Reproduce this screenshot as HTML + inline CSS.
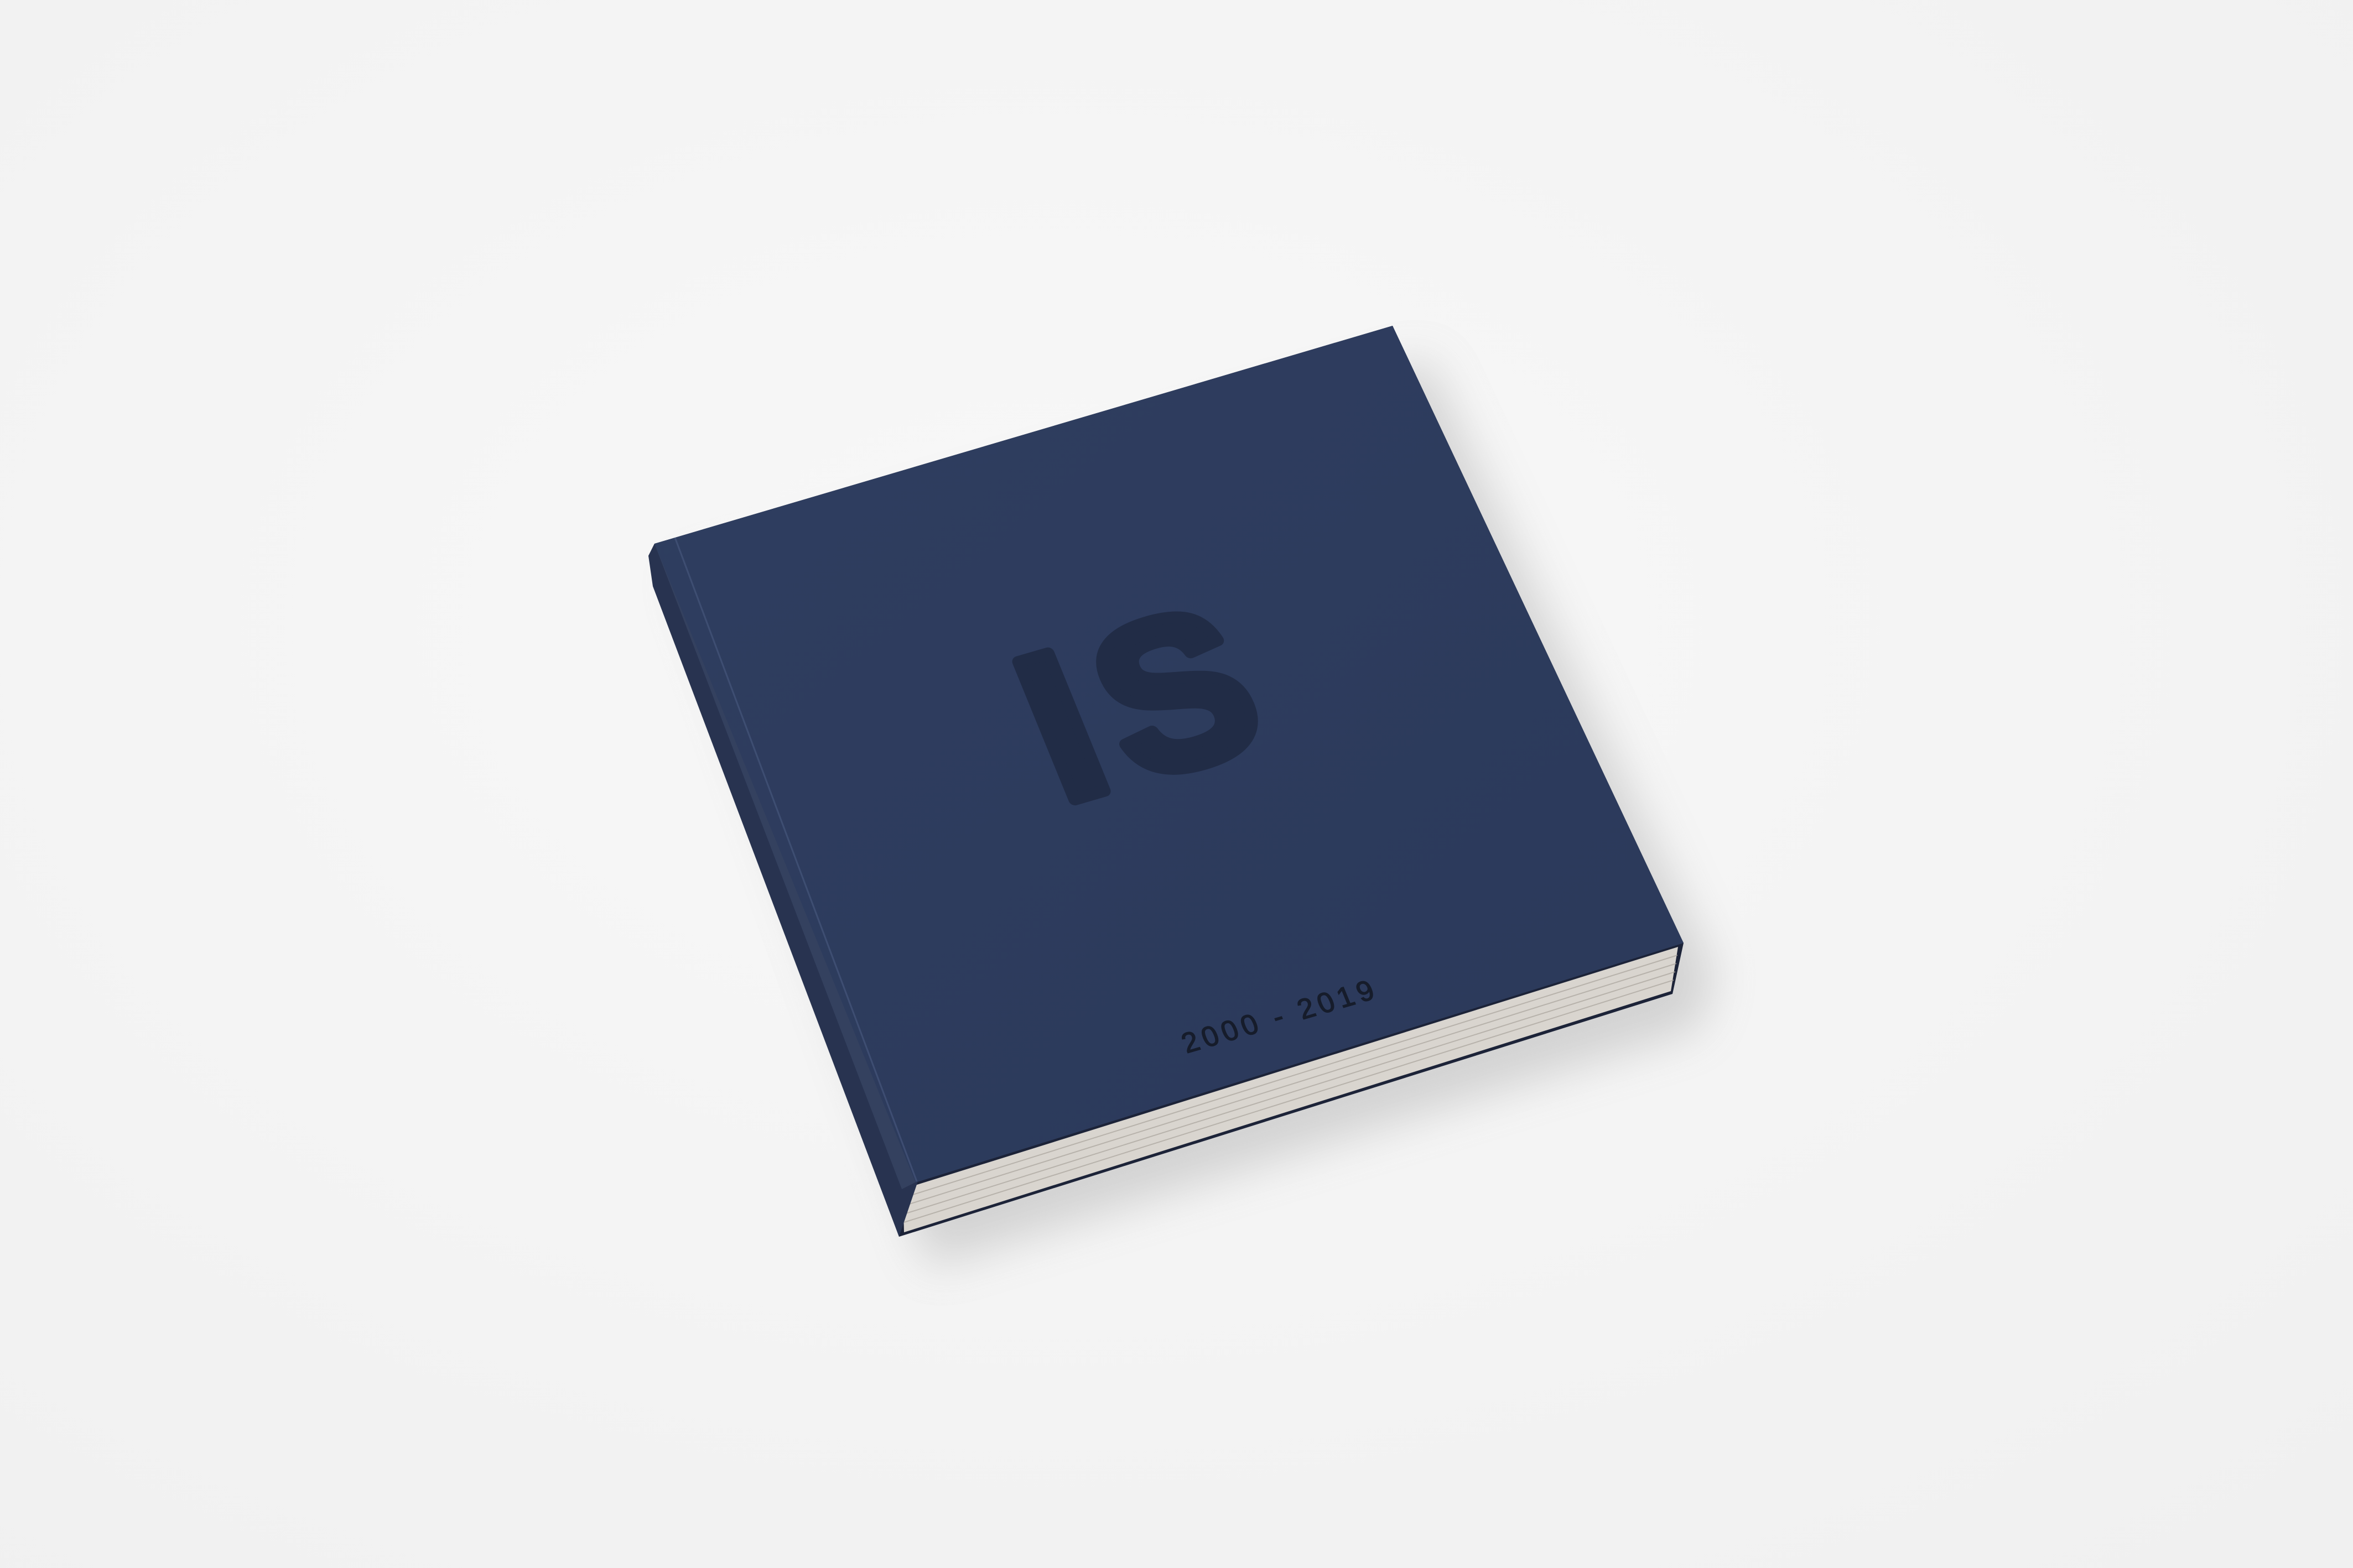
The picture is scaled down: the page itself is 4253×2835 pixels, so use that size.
<!DOCTYPE html>
<html><head><meta charset="utf-8"><style>
html,body{margin:0;padding:0;background:#f4f4f4;}
svg{display:block}
</style></head><body>
<svg width="4253" height="2835" viewBox="0 0 4253 2835" xmlns="http://www.w3.org/2000/svg">
<defs>
<radialGradient id="bg" cx="0.45" cy="0.4" r="0.9">
<stop offset="0" stop-color="#f8f8f8"/><stop offset="1" stop-color="#efefef"/>
</radialGradient>
<linearGradient id="cov" x1="0" y1="0" x2="1" y2="1">
<stop offset="0" stop-color="#2f3e60"/><stop offset="1" stop-color="#2b395a"/>
</linearGradient>
<filter id="blur" x="-20%" y="-20%" width="140%" height="140%"><feGaussianBlur stdDeviation="40"/></filter>
</defs>
<rect width="4253" height="2835" fill="url(#bg)"/>
<polygon points="1230,1040 2580,650 3100,1760 3070,1860 1680,2290" fill="#a0a0a0" opacity="0.4" filter="url(#blur)"/>
<polygon points="1183,983 2517,589 3043,1705 3023,1797 1625,2236 1172,1005" fill="#1c2338"/>
<polygon points="1632,2150 3033,1712 3020,1792 1634,2228" fill="#d9d5cf"/>
<g stroke="#a9a49c" stroke-width="2" opacity="0.7">
<line x1="1634" y1="2165" x2="3032" y2="1727"/>
<line x1="1634" y1="2180" x2="3030" y2="1742"/>
<line x1="1634" y1="2195" x2="3028" y2="1757"/>
<line x1="1634" y1="2210" x2="3025" y2="1772"/>
</g>
<polygon points="1172,1005 1183,983 1660,2133 1625,2236 1180,1060" fill="#283350"/>
<polygon points="1183,983 1222,972 1660,2135 1630,2150" fill="#34415f"/>
<polygon points="1183,983 2517,589 3043,1705 1655,2138" fill="url(#cov)"/>
<line x1="1220" y1="972" x2="1657" y2="2136" stroke="#4a5a80" stroke-width="3" opacity="0.6"/>
<g transform="matrix(0.96,-0.28,0.378,0.926,1183,983)">
<text x="505" y="660" font-family="Liberation Sans, sans-serif" font-weight="bold" font-size="390" fill="#212c46" stroke="#212c46" stroke-width="22" stroke-linejoin="round" letter-spacing="30">IS</text>
<text x="545" y="1160" font-family="Liberation Sans, sans-serif" font-size="52" fill="#161c2b" stroke="#161c2b" stroke-width="1.5" letter-spacing="8">2000 - 2019</text>
</g>
</svg>
</body></html>
